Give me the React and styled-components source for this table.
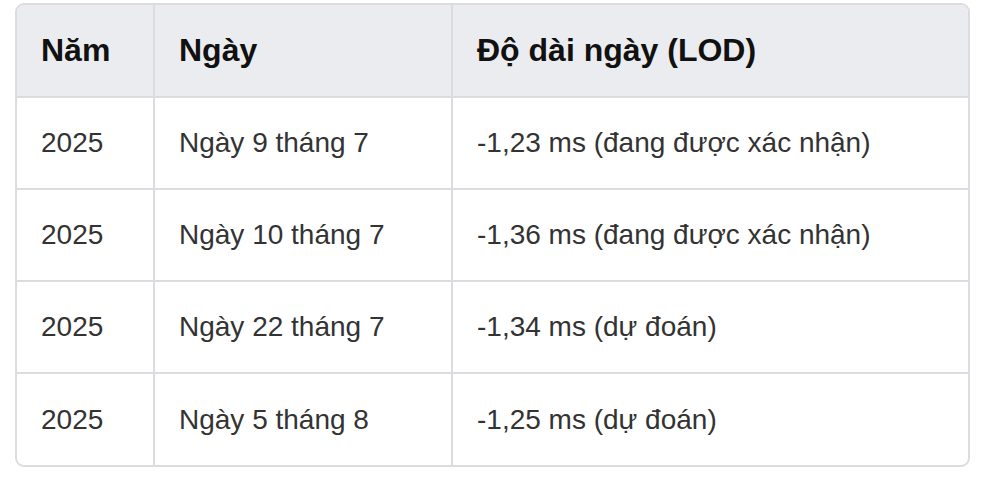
import React from 'react';
import styled, { createGlobalStyle } from 'styled-components';

const Global = createGlobalStyle`
  body {
    margin: 0;
    background: #fff;
    font-family: "Liberation Sans", Arial, Helvetica, sans-serif;
  }
`;

const Page = styled.div`
  padding: 3px 12px 0 15px;
`;

const Frame = styled.div`
  width: 955px;
  box-sizing: border-box;
  border: 2px solid #dcdce0;
  border-radius: 9px;
  overflow: hidden;
`;

const Table = styled.table`
  width: 100%;
  border-collapse: collapse;
  table-layout: fixed;
`;

const HeadCell = styled.th`
  background: #ebecef;
  color: #111;
  font-size: 32px;
  font-weight: 700;
  text-align: left;
  height: 92px;
  padding: 0 24px;
  box-sizing: border-box;
  border-left: ${(p) => (p.$first ? '0' : '2px solid #dcdce0')};
  border-bottom: 2px solid #dcdce0;
`;

const Cell = styled.td`
  color: #333;
  font-size: 28px;
  height: 92px;
  padding: 0 24px;
  box-sizing: border-box;
  border-left: ${(p) => (p.$first ? '0' : '2px solid #dcdce0')};
  border-bottom: ${(p) => (p.$last ? '0' : '2px solid #dcdce0')};
`;

const rows = [
  ['2025', 'Ngày 9 tháng 7', '-1,23 ms (đang được xác nhận)'],
  ['2025', 'Ngày 10 tháng 7', '-1,36 ms (đang được xác nhận)'],
  ['2025', 'Ngày 22 tháng 7', '-1,34 ms (dự đoán)'],
  ['2025', 'Ngày 5 tháng 8', '-1,25 ms (dự đoán)'],
];

export default function App() {
  return (
    <Page>
      <Global />
      <Frame>
        <Table>
          <colgroup>
            <col style={{ width: 137 }} />
            <col style={{ width: 298 }} />
            <col />
          </colgroup>
          <thead>
            <tr>
              <HeadCell $first>Năm</HeadCell>
              <HeadCell>Ngày</HeadCell>
              <HeadCell>Độ dài ngày (LOD)</HeadCell>
            </tr>
          </thead>
          <tbody>
            {rows.map((r, i) => (
              <tr key={i}>
                {r.map((c, j) => (
                  <Cell key={j} $first={j === 0} $last={i === rows.length - 1}>
                    {c}
                  </Cell>
                ))}
              </tr>
            ))}
          </tbody>
        </Table>
      </Frame>
    </Page>
  );
}
